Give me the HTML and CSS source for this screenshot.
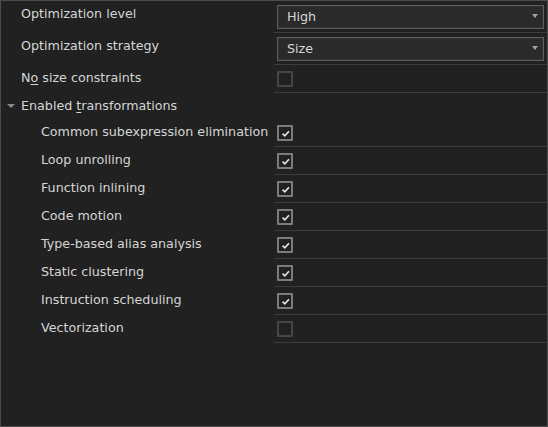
FILE: index.html
```html
<!DOCTYPE html>
<html>
<head>
<meta charset="utf-8">
<link rel="stylesheet" href="styles.css">
</head>
<body>
<div class="panel">
  <div class="row tall">
    <div class="label"><span>Optimization level</span></div>
    <div class="value"><div class="combo"><span>High</span><i class="caret"></i></div></div>
  </div>
  <div class="row tall">
    <div class="label"><span>Optimization strategy</span></div>
    <div class="value"><div class="combo"><span>Size</span><i class="caret"></i></div></div>
  </div>
  <div class="row">
    <div class="label"><span>N<u>o</u> size constraints</span></div>
    <div class="value"><span class="check"></span></div>
  </div>
  <div class="row group">
    <div class="label"><i class="tri"></i><span>Enabled <u>t</u>ransformations</span></div>
  </div>
  <div class="row">
    <div class="label sub"><span>Common subexpression elimination</span></div>
    <div class="value"><span class="check on"><svg viewBox="0 0 11 11" width="11" height="11"><polyline points="2.6,5.6 4.8,7.8 9,3.2"/></svg></span></div>
  </div>
  <div class="row">
    <div class="label sub"><span>Loop unrolling</span></div>
    <div class="value"><span class="check on"><svg viewBox="0 0 11 11" width="11" height="11"><polyline points="2.6,5.6 4.8,7.8 9,3.2"/></svg></span></div>
  </div>
  <div class="row">
    <div class="label sub"><span>Function inlining</span></div>
    <div class="value"><span class="check on"><svg viewBox="0 0 11 11" width="11" height="11"><polyline points="2.6,5.6 4.8,7.8 9,3.2"/></svg></span></div>
  </div>
  <div class="row">
    <div class="label sub"><span>Code motion</span></div>
    <div class="value"><span class="check on"><svg viewBox="0 0 11 11" width="11" height="11"><polyline points="2.6,5.6 4.8,7.8 9,3.2"/></svg></span></div>
  </div>
  <div class="row">
    <div class="label sub"><span>Type-based alias analysis</span></div>
    <div class="value"><span class="check on"><svg viewBox="0 0 11 11" width="11" height="11"><polyline points="2.6,5.6 4.8,7.8 9,3.2"/></svg></span></div>
  </div>
  <div class="row">
    <div class="label sub"><span>Static clustering</span></div>
    <div class="value"><span class="check on"><svg viewBox="0 0 11 11" width="11" height="11"><polyline points="2.6,5.6 4.8,7.8 9,3.2"/></svg></span></div>
  </div>
  <div class="row">
    <div class="label sub"><span>Instruction scheduling</span></div>
    <div class="value"><span class="check on"><svg viewBox="0 0 11 11" width="11" height="11"><polyline points="2.6,5.6 4.8,7.8 9,3.2"/></svg></span></div>
  </div>
  <div class="row">
    <div class="label sub"><span>Vectorization</span></div>
    <div class="value"><span class="check"></span></div>
  </div>
</div>
</body>
</html>
```
FILE: styles.css
```css
html, body {
  margin: 0;
  padding: 0;
  background: #212121;
}
.panel {
  box-sizing: border-box;
  width: 548px;
  height: 427px;
  border: 1px solid #4c4c4c;
  background: #212121;
  font-family: "DejaVu Sans", Verdana, sans-serif;
  font-size: 12.7px;
  color: #d6d6d6;
  display: flex;
  flex-direction: column;
}
.row {
  display: grid;
  grid-template-columns: 273px 1fr;
  height: 28px;
}
.row.tall {
  height: 32px;
}
.row.group {
  height: 26px;
}
.label {
  padding-left: 20px;
  line-height: 26px;
  white-space: nowrap;
  display: flex;
  align-items: flex-start;
}
.label.sub {
  padding-left: 40px;
}
.group .label {
  padding-left: 6px;
}
.tri {
  display: block;
  width: 0;
  height: 0;
  border-left: 4px solid transparent;
  border-right: 4px solid transparent;
  border-top: 4px solid #8a8a8a;
  margin-top: 11px;
  margin-right: 6px;
}
u {
  text-decoration: underline;
  text-underline-offset: 2px;
}
.value {
  border-bottom: 1px solid #3c3c3c;
  padding: 0 3px;
}
.combo {
  box-sizing: border-box;
  height: 24px;
  margin-top: 4px;
  border: 1px solid #5e5e5e;
  box-shadow: inset 0 0 0 1px #323232;
  background: #2a2a2a;
  display: flex;
  align-items: center;
  justify-content: space-between;
  padding: 0 5px 0 9px;
  line-height: 22px;
}
.caret {
  display: block;
  width: 0;
  height: 0;
  border-left: 3.5px solid transparent;
  border-right: 3.5px solid transparent;
  border-top: 4px solid #a0a0a0;
  margin-top: -2px;
}
.check {
  box-sizing: border-box;
  display: flex;
  align-items: center;
  justify-content: center;
  width: 16px;
  height: 16px;
  margin-top: 6px;
  border: 2px solid #464646;
  border-radius: 1px;
}
.check.on {
  border-color: #7c7c7c;
}
.check svg polyline {
  fill: none;
  stroke: #e4e4e4;
  stroke-width: 1.7;
}
```
